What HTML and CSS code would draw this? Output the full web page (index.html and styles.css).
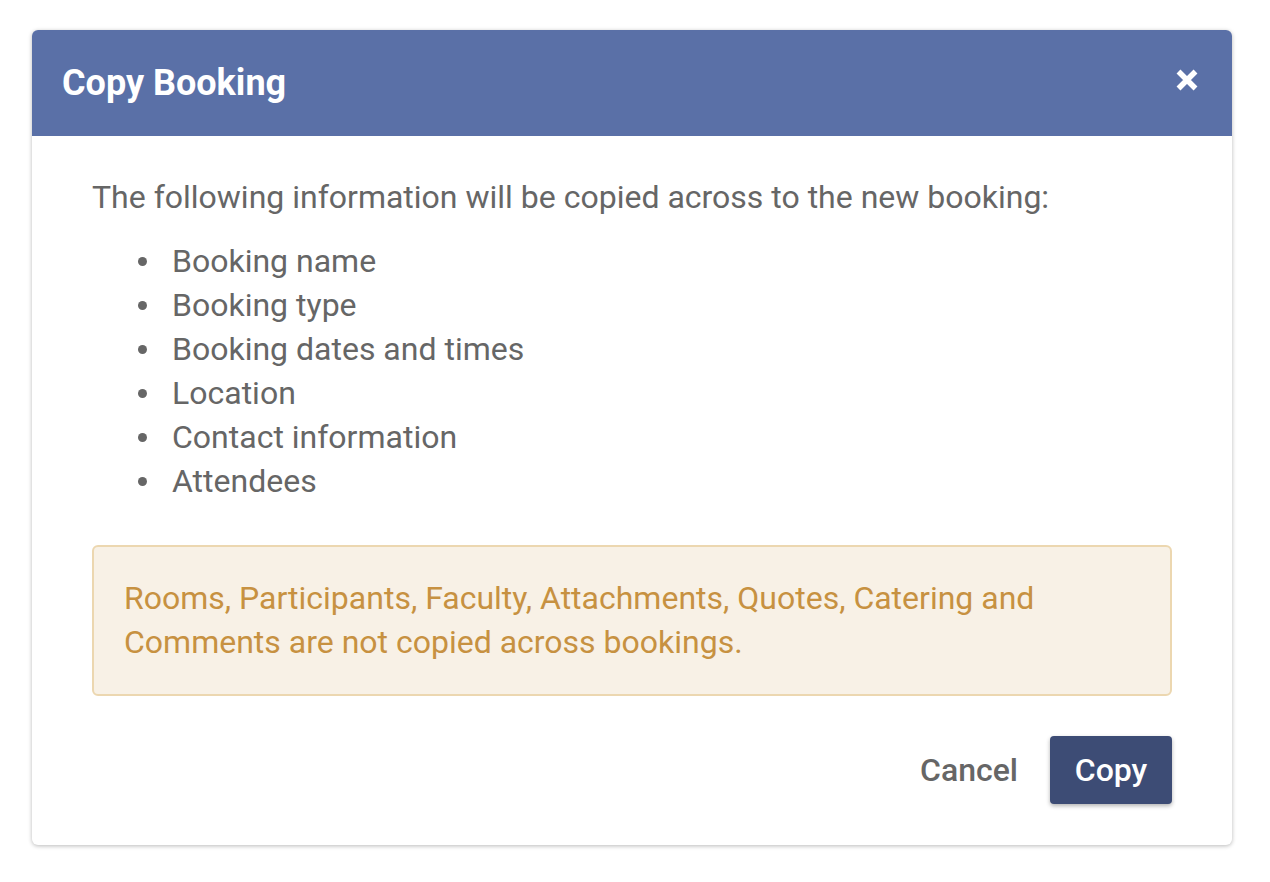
FILE: index.html
```html
<!DOCTYPE html>
<html lang="en">
<head>
<meta charset="utf-8">
<title>Copy Booking</title>
<link rel="stylesheet" href="styles.css">
</head>
<body>
<div class="dialog">
  <div class="dialog-header">
    <h1 class="dialog-title">Copy Booking</h1>
    <button class="close-btn" aria-label="Close">
      <svg width="24" height="24" viewBox="0 0 24 24"><path d="M3.5 3.5 L20.5 20.5 M20.5 3.5 L3.5 20.5" stroke="#fff" stroke-width="5.5" stroke-linecap="butt" fill="none"/></svg>
    </button>
  </div>
  <div class="dialog-body">
    <p class="intro">The following information will be copied across to the new booking:</p>
    <ul class="info-list">
      <li>Booking name</li>
      <li>Booking type</li>
      <li>Booking dates and times</li>
      <li>Location</li>
      <li>Contact information</li>
      <li>Attendees</li>
    </ul>
    <div class="alert">Rooms, Participants, Faculty, Attachments, Quotes, Catering and Comments are not copied across bookings.</div>
    <div class="actions">
      <button class="btn btn-text">Cancel</button>
      <button class="btn btn-primary">Copy</button>
    </div>
  </div>
</div>
</body>
</html>
```
FILE: styles.css
```css
html, body {
  margin: 0;
  padding: 0;
  background: #ffffff;
}
body {
  font-family: Roboto, "Noto Sans", sans-serif;
  padding: 30px 38px 30px 32px;
}
.dialog {
  width: 1200px;
  background: #fff;
  border-radius: 6px;
  box-shadow: 0 1px 4px rgba(0,0,0,0.28);
  overflow: hidden;
}
.dialog-header {
  height: 106px;
  background: #5a70a7;
  display: flex;
  align-items: center;
  justify-content: space-between;
  padding: 0 33px 0 30px;
  box-sizing: border-box;
}
.dialog-title {
  margin: 0;
  color: #fff;
  font-size: 36px;
  font-weight: 700;
  line-height: 44px;
  padding-top: 0;
}
.close-btn {
  background: none;
  border: none;
  padding: 0;
  width: 24px;
  height: 24px;
  display: flex;
  margin-top: -6px;
  cursor: pointer;
}
.dialog-body {
  padding: 39px 60px 41px 60px;
  color: #666666;
  font-size: 32px;
  line-height: 44px;
}
.intro {
  margin: 0 0 20px 0;
}
.info-list {
  margin: 0;
  padding-left: 46px;
  list-style: none;
}
.info-list li {
  display: flex;
  align-items: center;
  gap: 25px;
}
.info-list li::before {
  content: "";
  width: 9px;
  height: 9px;
  border-radius: 50%;
  background: #666666;
  flex-shrink: 0;
}
.alert {
  margin-top: 42px;
  background: #f8f1e6;
  border: 2px solid #ecd7b0;
  border-radius: 6px;
  color: #c79141;
  padding: 29px 30px 30px 30px;
}
.actions {
  margin-top: 40px;
  display: flex;
  justify-content: flex-end;
  align-items: center;
  gap: 4px;
}
.btn {
  font-family: Roboto, "Noto Sans", sans-serif;
  font-size: 32px;
  font-weight: 500;
  height: 68px;
  padding: 0 24px;
  border: none;
  border-radius: 4px;
  cursor: pointer;
}
.btn-text {
  background: transparent;
  color: #666666;
  padding-right: 28px;
}
.btn-primary {
  width: 122px;
  padding: 0;
  background: #3d4c75;
  color: #fff;
  box-shadow: 0 2px 4px rgba(0,0,0,0.3);
}
```
